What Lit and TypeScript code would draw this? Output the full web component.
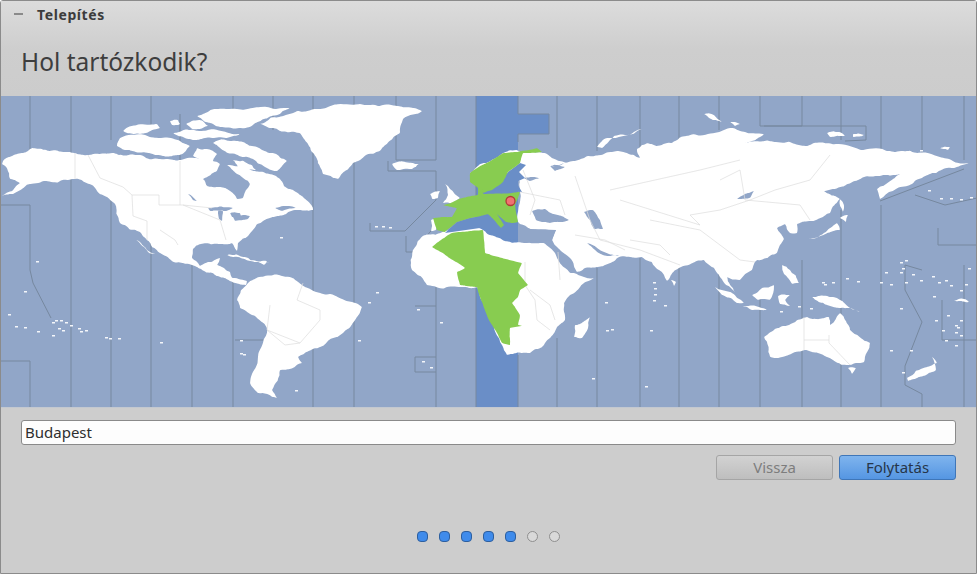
import { LitElement, html, css, svg } from "lit";
import { customElement } from "lit/decorators.js";

const LAND: string[] = [
  // North America
  "3,161 12,156 32,148 50,151 75,153 88,155 100,154 113,153 135,155 167,159 180,160 207,159 220,164 217,171 203,179 207,186 227,189 237,199 243,198 250,184 248,181 237,174 227,165 240,166 253,171 270,174 280,179 284,186 293,190 302,196 312,206 313,210 297,210 286,214 270,218 257,224 248,236 238,243 237,251 232,243 222,244 200,244 193,249 192,258 200,266 212,262 220,258 217,265 230,272 232,278 247,281 246,285 230,281 213,273 197,267 173,262 160,253 147,240 140,232 120,223 115,204 100,194 90,184 72,179 43,181 13,194 2,196 20,183 10,179 7,168 2,164",
  "136,240 141,243 155,254 149,253",
  // Greenland
  "260,124 283,116 313,109 360,104 397,106 422,111 403,119 400,133 380,151 353,163 338,179 323,174 317,159 308,144 300,133 277,129",
  "392,164 405,162 419,164 412,169 397,170",
  "445,184 450,189 460,198 452,203 443,203 448,195",
  "430,194 440,191 438,198 432,199",
  "431,220 436,219 436,230 431,231",
  // Arctic Canada
  "197,116 227,109 290,108 263,119 240,128 213,124",
  "123,131 157,124 160,128 133,134",
  "170,121 178,120 180,124 172,125",
  "120,138 160,138 190,146 180,155 163,156 133,151 117,146",
  "173,133 200,131 240,134 213,138 190,139",
  "213,143 237,141 262,150 287,161 277,171 253,159 227,153",
  "197,148 217,154 213,161 193,156",
  "233,160 252,165 256,170 238,167",
  "186,124 200,120 208,126 192,129",
  // South America
  "237,300 248,283 258,277 293,278 320,293 362,307 357,317 343,333 320,347 298,357 302,363 280,370 272,390 277,398 258,393 250,383 263,343 267,328 240,308",
  // Eurasia
  "470,173 492,160 503,153 517,150 529,153 547,154 567,163 550,166 574,161 587,156 627,153 640,158 637,149 647,143 657,146 672,143 694,134 734,128 764,134 744,143 770,141 807,146 837,144 887,151 917,153 969,163 954,168 930,174 907,186 880,199 877,189 900,174 880,176 854,181 824,191 840,199 830,213 810,221 797,224 797,233 790,233 785,224 777,228 784,239 777,253 757,260 752,270 740,280 727,277 735,292 720,277 714,268 704,260 679,268 667,281 659,270 642,257 617,258 597,267 577,272 552,240 556,230 530,229 520,224 518,222 520,192 516,172",
  // Africa
  "413,250 425,235 445,231 480,228 500,238 525,243 544,243 570,273 594,278 564,303 565,320 557,327 550,338 530,353 507,355 502,345 490,320 480,297 477,287 460,287 427,285 412,270",
  // Australia
  "764,337 789,325 807,317 829,317 830,325 840,313 850,330 870,343 864,362 847,365 827,357 804,350 770,357",
  "848,368 856,368 852,374",
  "907,378 927,367 937,363 932,357 936,370 917,378 908,381",
  "812,297 840,300 860,312 840,308 827,305",
  "752,295 774,285 770,300 758,300",
  "715,287 744,303 737,303 722,295",
  "742,306 767,310 752,310",
  "778,296 790,295 785,300 790,306 780,304",
  "782,265 790,270 799,283 792,284 784,274",
  "590,317 582,338 574,337 575,325",
  "671,280 676,282 674,286",
  // Japan etc
  "837,223 840,230 815,238 809,239 826,232",
  "840,218 848,215 846,222",
  "840,199 844,205 843,212 840,206",
  "642,129 614,136 602,148 597,147 606,138",
  "704,114 712,114 722,122 713,120",
  "730,122 740,124 735,126",
  "827,133 840,132 845,136 830,137",
  "853,134 864,135 853,137",
  "940,148 950,147 948,150",
  // Caribbean
  "227,255 245,257 270,263 250,261",
  "258,262 267,261 264,265",
  "953,301 965,299 969,302",
  "430,254 438,253 436,258",
];

const WATER: string[] = [
  "532,211 545,209 553,214 569,220 550,223 536,220",
  "584,212 593,210 600,220 603,229 594,229 590,220",
  "737,199 754,191 750,198",
  "587,243 600,250 620,256 607,256 595,250",
  "208,208 233,208 226,211 210,211",
  "218,211 223,211 222,221 219,219",
  "230,213 240,213 241,219 232,217",
  "233,217 250,216 248,219 235,221",
  "188,194 192,196 197,201 193,200",
  "275,208 290,206 296,208 282,211",
  "550,166 565,167 555,171",
  "524,178 540,178 530,181",
];

const BALTIC = "492,190 503,182 508,172 520,163 526,165 519,172 525,178 516,182 522,192";
const MED = "445,233 457,222 470,218 490,215 500,225 512,223 518,226 518,240 500,238 480,228";
const MED_B = "518,225 530,229 556,230 552,240 525,243 518,240";

const GREEN: string[] = [
  "470,173 492,160 503,153 517,152 537,148 542,152 523,153 520,163 508,172 503,182 492,190 483,193 477,187 470,182",
  "433,218 452,217 457,208 443,205 451,203 462,198 478,195 478,188 482,187 483,194 520,192 515,205 518,222 512,223 506,222 497,214 504,225 501,228 488,214 470,218 457,222 445,232 437,230",
  "432,247 452,233 483,230 485,253 522,263 518,273 528,285 520,290 518,297 512,303 520,315 518,325 522,326 510,328 510,345 502,343 490,322 480,297 477,287 460,285 457,272 465,268 448,257",
];

const ZONES: string[] = [
  "30,96 30,161", "30,205 30,270 33,283 51,318", "0,361 30,361 30,407",
  "0,205 30,205", "71,96 71,153", "71,179 71,407",
  "111,96 111,140", "111,200 111,407", "151,96 151,128", "151,240 151,407",
  "180,114 180,161", "192,260 192,407",
  "233,96 233,125", "233,280 233,407", "273,96 273,130", "273,330 273,385",
  "235,340 264,340", "313,96 313,407", "354,96 354,407",
  "396,96 396,160 436,160 436,96", "388,161 388,171 436,171 436,200 405,231 370,231 370,223",
  "406,236 406,252 413,252 436,225", "436,287 436,407", "415,306 436,306",
  "415,357 436,357", "415,357 415,372 436,372", "476,96 476,407",
  "518,96 518,114", "518,134 518,142", "518,355 518,407", "518,114 549,114 549,134 518,134",
  "557,96 557,148", "557,338 557,407",
  "597,96 597,151", "597,268 597,407", "640,96 640,150",
  "640,258 640,407", "679,96 679,143", "679,268 679,407", "719,96 719,130",
  "719,262 719,407", "760,96 760,126 802,126 802,96", "760,292 760,407",
  "802,260 802,407", "841,96 841,140", "841,210 841,407", "764,126 866,126 866,140 845,141",
  "881,96 881,151", "881,205 881,407", "922,96 922,155", "922,270 905,265 905,290 922,322 905,366 905,385 922,394 922,407",
  "964,96 964,160", "964,265 964,407", "938,228 938,245 977,245", "880,201 964,169",
  "915,195 945,205 977,198", "942,300 942,340 977,340",
];

const BORDERS: string[] = [
  "75,153 75,179", "88,155 100,178 123,187 132,195 133,216 147,221 147,240",
  "132,195 159,195 159,205 183,205 212,208", "180,161 180,205", "183,205 220,220 226,240",
  "160,230 175,240 178,245", "270,305 267,330 300,343 320,320 320,310 297,300 303,283",
  "267,330 285,345 300,343", "804,317 804,350", "829,335 829,343 850,365", "804,340 829,340",
  "523,170 535,200 530,215", "520,192 560,200 565,215", "575,176 590,220 600,240 640,250 680,265",
  "610,190 655,180 700,170 740,160", "620,200 700,225 690,215 720,210 750,200 775,190 810,180 830,155",
  "720,180 740,170 745,200 800,205 810,220", "650,220 700,230 720,245 740,260 755,262",
  "525,262 525,285 535,300 537,320 550,330", "530,290 550,305 555,320",
  "558,252 560,280", "575,235 605,240 625,250", "630,240 660,245 670,255",
];

const DOTS: [number, number][] = [
  [36,261],[24,291],[8,314],[15,326],[24,327],[37,331],[52,322],[55,320],[60,320],[65,322],[70,325],[58,328],[62,330],[78,328],[80,331],[85,330],[52,335],[105,337],[109,338],[118,338],[160,342],[240,340],[243,354],[240,353],
  [295,390],[358,340],[376,292],[368,302],[440,322],[417,309],[422,361],[430,367],[280,237],[375,226],[382,226],[389,227],
  [605,302],[650,330],[664,305],[606,330],[611,329],[592,378],[645,386],[857,281],[846,278],[832,282],[824,284],[880,282],[890,284],[905,282],[938,282],[933,296],[950,285],[960,290],[965,284],[900,308],[955,345],[947,315],[935,320],[942,330],[955,325],[960,320],[955,332],[960,335],[957,327],[945,340],[890,350],[902,372],[910,350],[968,268],[905,260],[932,276],[945,280],[885,272],[900,272],[920,280],[912,274],
  [900,262],[902,268],[822,282],[798,306],[810,308],[780,311],[653,282],[654,288],[654,294],[653,300],[920,150],[928,190],[940,198],[950,198],[960,199],[970,197],
];

type Pt = [number, number];

function parsePts(s: string): Pt[] {
  return s.split(" ").map((p) => p.split(",").map(Number) as Pt);
}

/** Coastline from a coarse outline: seeded midpoint displacement, then rounded corners. */
function coast(s: string, rough: number, seed: number): string {
  let r = seed;
  const rnd = () => {
    r = (r * 16807) % 2147483647;
    return r / 2147483647 - 0.5;
  };
  let pts = parsePts(s);
  for (let pass = 0; pass < 3; pass++) {
    const next: Pt[] = [];
    pts.forEach((a, i) => {
      const b = pts[(i + 1) % pts.length];
      next.push(a);
      const dx = b[0] - a[0];
      const dy = b[1] - a[1];
      const len = Math.hypot(dx, dy);
      if (len > 4) {
        const k = rnd() * rough;
        next.push([(a[0] + b[0]) / 2 - dy * k, (a[1] + b[1]) / 2 + dx * k]);
      }
    });
    pts = next;
  }
  const n = pts.length;
  let d = "";
  pts.forEach((v, i) => {
    const p = pts[(i + n - 1) % n];
    const q = pts[(i + 1) % n];
    const a = [v[0] + (p[0] - v[0]) * 0.25, v[1] + (p[1] - v[1]) * 0.25];
    const b = [v[0] + (q[0] - v[0]) * 0.25, v[1] + (q[1] - v[1]) * 0.25];
    d += `${i ? "L" : "M"}${a[0].toFixed(1)} ${a[1].toFixed(1)}Q${v[0].toFixed(1)} ${v[1].toFixed(1)} ${b[0].toFixed(1)} ${b[1].toFixed(1)}`;
  });
  return d + "Z";
}

const LAND_D = LAND.map((p, i) => coast(p, 0.2, 97 + i * 131));
const WATER_D = WATER.map((p, i) => coast(p, 0.14, 53 + i * 71));
const GREEN_D = GREEN.map((p, i) => coast(p, 0.06, 211 + i * 37));

@customElement("app-root")
export class AppRoot extends LitElement {
  static styles = css`
    :host {
      display: block;
      width: 977px;
      height: 574px;
      font-family: "Noto Sans", "Open Sans", sans-serif;
      overflow: hidden;
    }
    .window {
      box-sizing: border-box;
      width: 977px;
      height: 574px;
      display: flex;
      flex-direction: column;
      background: #cdcdcd;
      border: 1px solid #8b8b8b;
      border-radius: 3px 3px 0 0;
    }
    .head {
      height: 95px;
      flex: none;
      background: linear-gradient(#dcdcdc, #cecece 48px, #cccccc);
    }
    .titlebar {
      height: 26px;
      display: flex;
      align-items: center;
      gap: 14px;
      padding-left: 13px;
      color: #3c3c3c;
      font-size: 14px;
      font-weight: 700;
      letter-spacing: 0.6px;
    }
    .minus {
      width: 9px;
      height: 2px;
      background: #8a8a8a;
    }
    h1 {
      margin: 0;
      padding: 18px 0 0 20px;
      font-size: 24.5px;
      line-height: 34px;
      font-weight: 400;
      color: #3e3e3e;
    }
    .map {
      display: block;
      flex: none;
      width: 975px;
      height: 311px;
      filter: blur(0.4px);
    }
    .form {
      border-top: 1px solid #c3c8d0;
      padding: 12px 20px 0;
      flex: 1;
      display: flex;
      flex-direction: column;
    }
    .input {
      box-sizing: border-box;
      height: 25px;
      border: 1px solid #8a8a8a;
      border-radius: 3px;
      background: #fdfdfd;
      padding-left: 3px;
      font-size: 15px;
      line-height: 23px;
      color: #2f2f2f;
    }
    .actions {
      display: flex;
      justify-content: flex-end;
      gap: 6px;
      margin-top: 10px;
    }
    .btn {
      box-sizing: border-box;
      width: 117px;
      height: 25px;
      border-radius: 3px;
      font-size: 15px;
      line-height: 23px;
      text-align: center;
    }
    .back {
      border: 1px solid #a5a5a5;
      background: linear-gradient(#d2d2d2, #bebebe);
      color: #7d7d7d;
    }
    .next {
      border: 1px solid #3f76b8;
      background: linear-gradient(#7fb4ee, #5596e2);
      color: #26364a;
    }
    .dots {
      display: flex;
      justify-content: center;
      gap: 11px;
      margin: 51px 0 0;
    }
    .dot {
      box-sizing: border-box;
      width: 11px;
      height: 11px;
      border-radius: 4px;
    }
    .on {
      background: #3f8beb;
      border: 1px solid #2e5f9e;
    }
    .off {
      background: #d9d9d9;
      border: 1px solid #8f8f8f;
      border-radius: 50%;
    }
  `;

  private renderMap() {
    const ocean = "#91a6c8";
    const band = "#6a8ec7";
    return html`<svg class="map" viewBox="1 96 975 311" preserveAspectRatio="none">
      <rect x="0" y="96" width="977" height="312" fill=${ocean}></rect>
      <path d="M476 96H518V114H549V134H518V408H476Z" fill=${band}></path>
      ${ZONES.map(
        (p) => svg`<polyline points=${p} fill="none" stroke="#76889f" stroke-width="1"></polyline>`
      )}
      ${LAND_D.map((d) => svg`<path d=${d} fill="#fff"></path>`)}
      ${WATER_D.map((d) => svg`<path d=${d} fill=${ocean}></path>`)}
      <polygon points=${MED} fill=${band}></polygon>
      <polygon points=${MED_B} fill=${ocean}></polygon>
      <polygon points=${BALTIC} fill=${band}></polygon>
      ${BORDERS.map(
        (p) => svg`<polyline points=${p} fill="none" stroke="#dcdcdc" stroke-width="0.7"></polyline>`
      )}
      ${DOTS.map(
        ([x, y]) => svg`<rect x=${x} y=${y} width="3" height="1.5" fill="#f4f6fa"></rect>`
      )}
      ${GREEN_D.map((d) => svg`<path d=${d} fill="#88cc50"></path>`)}
      <circle cx="510.5" cy="201" r="4.5" fill="#f07272" stroke="#b23a36" stroke-width="1.3"></circle>
    </svg>`;
  }

  render() {
    const steps = [1, 1, 1, 1, 1, 0, 0];
    return html`<div class="window">
      <div class="head">
        <div class="titlebar"><span class="minus"></span><span>Telepítés</span></div>
        <h1>Hol tartózkodik?</h1>
      </div>
      ${this.renderMap()}
      <div class="form">
        <div class="input">Budapest</div>
        <div class="actions">
          <div class="btn back">Vissza</div>
          <div class="btn next">Folytatás</div>
        </div>
        <div class="dots">
          ${steps.map((s) => html`<span class="dot ${s ? "on" : "off"}"></span>`)}
        </div>
      </div>
    </div>`;
  }
}
